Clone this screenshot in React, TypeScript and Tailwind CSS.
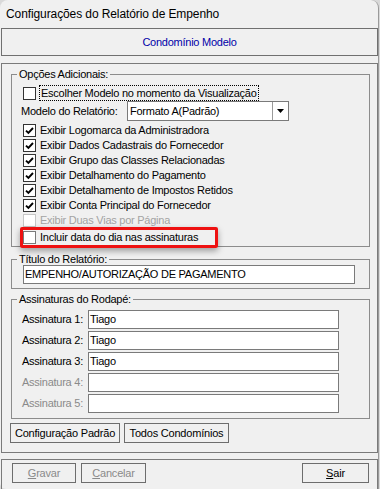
import React from 'react';

type Opt = { label: string; checked?: boolean; disabled?: boolean };

const options: Opt[] = [
  { label: 'Exibir Logomarca da Administradora', checked: true },
  { label: 'Exibir Dados Cadastrais do Fornecedor', checked: true },
  { label: 'Exibir Grupo das Classes Relacionadas', checked: true },
  { label: 'Exibir Detalhamento do Pagamento', checked: true },
  { label: 'Exibir Detalhamento de Impostos Retidos', checked: true },
  { label: 'Exibir Conta Principal do Fornecedor', checked: true },
  { label: 'Exibir Duas Vias por Página', disabled: true },
];

const signatures = [
  { label: 'Assinatura 1:', value: 'Tiago' },
  { label: 'Assinatura 2:', value: 'Tiago' },
  { label: 'Assinatura 3:', value: 'Tiago' },
  { label: 'Assinatura 4:', value: '', disabled: true },
  { label: 'Assinatura 5:', value: '', disabled: true },
];

const CheckBox: React.FC<{ checked?: boolean; disabled?: boolean; soft?: boolean }> = ({ checked, disabled, soft }) => (
  <span
    className={`flex h-[13px] w-[13px] shrink-0 items-center justify-center border bg-white ${
      disabled ? 'border-[#c6c6c6]' : soft ? 'border-[#7a7a7a]' : 'border-[#333333]'
    }`}
  >
    {checked && (
      <svg width="9" height="9" viewBox="0 0 9 9">
        <path d="M1 4.6 L3.4 7 L8 2" fill="none" stroke="#000" strokeWidth="1.9" />
      </svg>
    )}
  </span>
);

const WinButton: React.FC<{ className?: string; disabled?: boolean; children: React.ReactNode }> = ({
  className,
  disabled,
  children,
}) => (
  <button
    type="button"
    className={`flex h-5 items-center justify-center whitespace-nowrap border border-[#6d6d6d] bg-[#f0f0f0] text-[11px] tracking-[-0.2px] ${
      disabled ? 'text-[#8a8a8a]' : 'text-black'
    } ${className ?? ''}`}
  >
    {children}
  </button>
);

const App: React.FC = () => {
  return (
    <div className="h-[489px] w-[380px] overflow-hidden whitespace-nowrap bg-[#d9d9d9] font-['Liberation_Sans',Arial,sans-serif] text-[11px] tracking-[-0.25px] text-black">
      <div className="flex h-full w-[379px] flex-col rounded-t-[8px] rounded-bl-[6px] border-r border-[#9a9a9a] bg-[#f0f0f0] pl-[1px]">
        {/* Title bar */}
        <div className="flex h-[28px] shrink-0 items-center pl-[5px] text-[12px] tracking-[-0.1px]">
          Configurações do Relatório de Empenho
        </div>

        {/* Header */}
        <div className="flex h-[28px] shrink-0 items-center justify-center border border-[#707070] text-[#0000a8]">
          Condomínio Modelo
        </div>

        {/* Main panel */}
        <div className="mt-[7px] flex h-[390px] shrink-0 flex-col border border-[#7a7a7a] pt-[4px]">
          {/* Opções Adicionais */}
          <fieldset className="ml-[9px] mr-[7px] min-w-0 border border-[#8c8c8c]">
            <legend className="ml-[5px] px-[2px] leading-[12px]">Opções Adicionais:</legend>
            <div className="flex flex-col pl-[11px] pt-[5px] pb-[1px]">
              <div className="flex h-4 items-center gap-[3px]">
                <CheckBox />
                <span className="flex h-4 items-center border border-dotted border-black px-[1px] leading-none">
                  Escolher Modelo no momento da Visualização
                </span>
              </div>

              <div className="flex h-5 items-center">
                <span className="-ml-[2px] w-[106px] shrink-0">Modelo do Relatório:</span>
                <div className="flex h-5 w-[162px] items-center border border-[#7a7a7a] bg-white">
                  <span className="flex-1 pl-[2px]">Formato A(Padrão)</span>
                  <span className="flex h-full w-[16px] items-center justify-center border-l border-[#9a9a9a] bg-white">
                    <svg width="7" height="4" viewBox="0 0 7 4">
                      <path d="M0 0 H7 L3.5 4 Z" fill="#000" />
                    </svg>
                  </span>
                </div>
              </div>

              <div className="mt-[2px] flex flex-col">
                {options.map((o) => (
                  <div key={o.label} className="flex h-[15px] items-center gap-[4px]">
                    <CheckBox checked={o.checked} disabled={o.disabled} />
                    <span className={o.disabled ? 'text-[#a3a3a3]' : 'text-black'}>{o.label}</span>
                  </div>
                ))}
                <div className="relative mt-[2px] flex h-[15px] items-center gap-[4px]">
                  <CheckBox soft />
                  <span>Incluir data do dia nas assinaturas</span>
                  <span className="pointer-events-none absolute -left-[3px] -top-[3px] h-[21px] w-[198px] rounded-[2px] border-[3px] border-[#ee1111] shadow-[0_3px_6px_rgba(0,0,0,0.35)]" />
                </div>
              </div>
            </div>
          </fieldset>

          {/* Título do Relatório */}
          <fieldset className="ml-[9px] mr-[7px] mt-[6px] min-w-0 border border-[#8c8c8c]">
            <legend className="ml-[5px] px-[2px] leading-[12px]">Título do Relatório:</legend>
            <div className="pl-[11px] pb-[4px]">
              <div className="flex h-[19px] w-[332px] items-center border border-[#7a7a7a] bg-white pl-[1px]">
                EMPENHO/AUTORIZAÇÃO DE PAGAMENTO
              </div>
            </div>
          </fieldset>

          {/* Assinaturas do Rodapé */}
          <fieldset className="ml-[9px] mr-[7px] mt-[4px] min-w-0 border border-[#8c8c8c]">
            <legend className="ml-[5px] px-[2px] leading-[12px]">Assinaturas do Rodapé:</legend>
            <div className="flex flex-col gap-[2px] pl-[10px] pt-[5px] pb-[5px]">
              {signatures.map((s) => (
                <div key={s.label} className="flex h-[19px] items-center">
                  <span className={`w-[66px] shrink-0 ${s.disabled ? 'text-[#8a8a8a]' : 'text-black'}`}>{s.label}</span>
                  <div className="flex h-[19px] w-[251px] items-center border border-[#7a7a7a] bg-white pl-[1px]">
                    {s.value}
                  </div>
                </div>
              ))}
            </div>
          </fieldset>

          <div className="ml-[8px] mt-[4px] flex gap-[4px]">
            <WinButton className="w-[110px]">Configuração Padrão</WinButton>
            <WinButton className="w-[105px]">Todos Condomínios</WinButton>
          </div>
        </div>

        {/* Footer */}
        <div className="mt-[6px] flex flex-1 items-start border-l border-r border-t border-[#7a7a7a] pl-[10px] pr-[8px] pt-[3px]">
          <WinButton disabled className="w-[64px]">
            <span className="underline">G</span>ravar
          </WinButton>
          <WinButton disabled className="ml-[5px] w-[65px]">
            <span className="underline">C</span>ancelar
          </WinButton>
          <WinButton className="ml-auto w-[67px]">
            <span className="underline">S</span>air
          </WinButton>
        </div>
      </div>
    </div>
  );
};

export default App;
